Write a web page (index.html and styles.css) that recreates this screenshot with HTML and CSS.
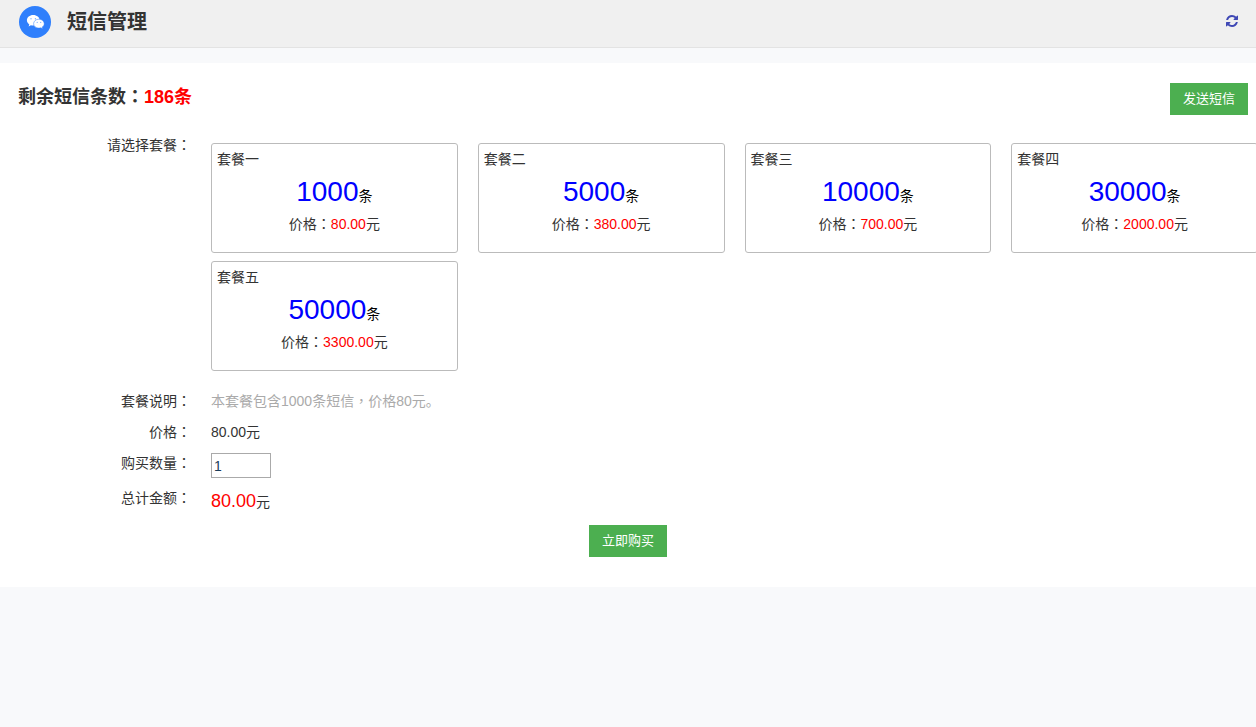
FILE: index.html
```html
<!DOCTYPE html>
<html lang="zh-CN">
<head>
<meta charset="utf-8">
<title>短信管理</title>
<link rel="stylesheet" href="styles.css">
</head>
<body>
<header class="topbar">
  <svg class="logo" viewBox="0 0 32 32" aria-hidden="true">
    <circle cx="16" cy="16" r="16" fill="#2f7ffc"/>
    <path d="M14.200 9C10.600 9 7.900 11.300 7.900 14.300c0 1.700.9 3.100 2.400 4.100l-.7 2 2.300-1.200c.8.2 1.500.3 2.300.3 3.600 0 6.500-2.300 6.500-5.200S17.800 9 14.200 9z" fill="#fff"/>
    <path d="M19.900 13.200c-3 0-5.300 2-5.300 4.500s2.300 4.400 5.300 4.400c.6 0 1.300-.1 1.900-.3l1.900 1-.5-1.700c1.200-.8 2-2 2-3.400 0-2.500-2.400-4.500-5.300-4.500z" fill="#fff" stroke="#2f7ffc" stroke-width=".5"/>
    <g fill="#2f7ffc" fill-opacity=".6"><circle cx="12" cy="12.800" r=".7"/><circle cx="16.400" cy="12.800" r=".7"/><circle cx="18.200" cy="16.400" r=".6"/><circle cx="21.700" cy="16.400" r=".6"/></g>
  </svg>
  <h1 class="title">短信管理</h1>
  <button class="refresh" type="button" aria-label="刷新">
    <svg class="refresh-icon" viewBox="0 0 1792 1792" aria-hidden="true"><path fill="currentColor" d="M1639 1056q0 5-1 7-64 268-268 434.500t-478 166.500q-146 0-282.500-55t-243.500-157l-129 129q-19 19-45 19t-45-19-19-45v-448q0-26 19-45t45-19h448q26 0 45 19t19 45-19 45l-137 137q71 66 161 102t187 36q134 0 250-65t186-179q11-17 53-117 8-23 30-23h192q13 0 22.500 9.500t9.500 22.500zm25-800v448q0 26-19 45t-45 19h-448q-26 0-45-19t-19-45 19-45l138-138q-148-137-349-137-134 0-250 65t-186 179q-11 17-53 117-8 23-30 23h-199q-13 0-22.500-9.500t-9.500-22.500v-7q65-268 270-434.500t480-166.500q146 0 284 55.500t245 156.500l130-129q19-19 45-19t45 19 19 45z"/></svg>
  </button>
</header>
<main class="panel">
  <div class="summary">
    <h2 class="balance">剩余短信条数<span class="punct" lang="zh-TW">：</span><span class="red">186条</span></h2>
    <button class="btn" type="button">发送短信</button>
  </div>
  <form class="form">
    <div class="label">请选择套餐<span class="punct" lang="zh-TW">：</span></div>
    <div class="packages">
      <button class="card" type="button"><span class="name">套餐一</span><span class="count"><span class="num">1000</span>条</span><span class="cost">价格<span class="punct" lang="zh-TW">：</span><span class="red">80.00</span>元</span></button>
      <button class="card" type="button"><span class="name">套餐二</span><span class="count"><span class="num">5000</span>条</span><span class="cost">价格<span class="punct" lang="zh-TW">：</span><span class="red">380.00</span>元</span></button>
      <button class="card" type="button"><span class="name">套餐三</span><span class="count"><span class="num">10000</span>条</span><span class="cost">价格<span class="punct" lang="zh-TW">：</span><span class="red">700.00</span>元</span></button>
      <button class="card" type="button"><span class="name">套餐四</span><span class="count"><span class="num">30000</span>条</span><span class="cost">价格<span class="punct" lang="zh-TW">：</span><span class="red">2000.00</span>元</span></button>
      <button class="card" type="button"><span class="name">套餐五</span><span class="count"><span class="num">50000</span>条</span><span class="cost">价格<span class="punct" lang="zh-TW">：</span><span class="red">3300.00</span>元</span></button>
    </div>
    <div class="label">套餐说明<span class="punct" lang="zh-TW">：</span></div>
    <div class="value note">本套餐包含1000条短信<span class="punct" lang="zh-TW">，</span>价格80元。</div>
    <div class="label">价格<span class="punct" lang="zh-TW">：</span></div>
    <div class="value">80.00元</div>
    <label class="label" for="qty">购买数量<span class="punct" lang="zh-TW">：</span></label>
    <div class="value"><input class="qty" id="qty" type="text" value="1"></div>
    <div class="label">总计金额<span class="punct" lang="zh-TW">：</span></div>
    <div class="value total"><span class="amount">80.00</span>元</div>
  </form>
  <div class="actions"><button class="btn" type="button">立即购买</button></div>
</main>
</body>
</html>
```
FILE: styles.css
```css
* { box-sizing: border-box; }
body {
  margin: 0;
  overflow-x: hidden;
  background: #f8f9fb;
  color: #333;
  font: 14px/20px "Liberation Sans", "Noto Sans CJK SC", sans-serif;
}
button, input { font: inherit; }
.punct { font-family: "Noto Sans CJK TC", sans-serif; }
.red { color: #f00; }
.topbar {
  display: flex;
  align-items: center;
  height: 48px;
  padding: 0 17px 4px 19px;
  background: #f0f0f0;
  border-bottom: 1px solid #e3e3e3;
}
.logo { width: 32px; height: 32px; }
.title { margin: 0 auto 0 16px; font-size: 20px; line-height: 32px; }
.refresh { display: flex; padding: 0 0 2px; border: 0; background: none; color: #3f48b5; }
.refresh-icon { width: 14px; height: 14px; }
.panel { margin-top: 15px; padding: 20px 0 30px; background: #fff; }
.summary {
  display: flex;
  justify-content: space-between;
  align-items: flex-start;
  padding: 0 8px 0 18px;
}
.balance { margin: 0; font-size: 18px; line-height: 24px; }
.btn {
  height: 32px;
  padding: 0 13px;
  border: 0;
  background: #4caf50;
  color: #fff;
  font-size: 13px;
  line-height: 30px;
}
.form {
  display: grid;
  grid-template-columns: 191px minmax(0, 1fr);
  column-gap: 20px;
  padding-top: 20px;
}
.label { text-align: right; line-height: 18px; }
.value { min-height: 31px; }
.packages {
  display: grid;
  grid-template-columns: repeat(4, minmax(0, 1fr));
  gap: 8px 20px;
  margin: 8px -2px 20px 0;
}
.card {
  display: flex;
  flex-direction: column;
  height: 110px;
  padding: 5px;
  border: 1px solid #bbb;
  border-radius: 3px;
  background: #fff;
  color: #333;
  text-align: center;
}
.card .name { text-align: left; }
.count { margin-top: 2px; color: #000; }
.num { color: #00f; font-size: 28px; line-height: 42px; }
.note { color: #aaa; line-height: 18px; }
.qty {
  display: block;
  width: 60px;
  height: 25px;
  margin-bottom: 10px;
  padding: 0 2px;
  border: 1px solid #aaa;
  color: #1a3c5a;
}
.total { line-height: 26px; }
.amount { color: #f00; font-size: 18px; }
.actions { display: flex; justify-content: center; padding-top: 6px; }
```
